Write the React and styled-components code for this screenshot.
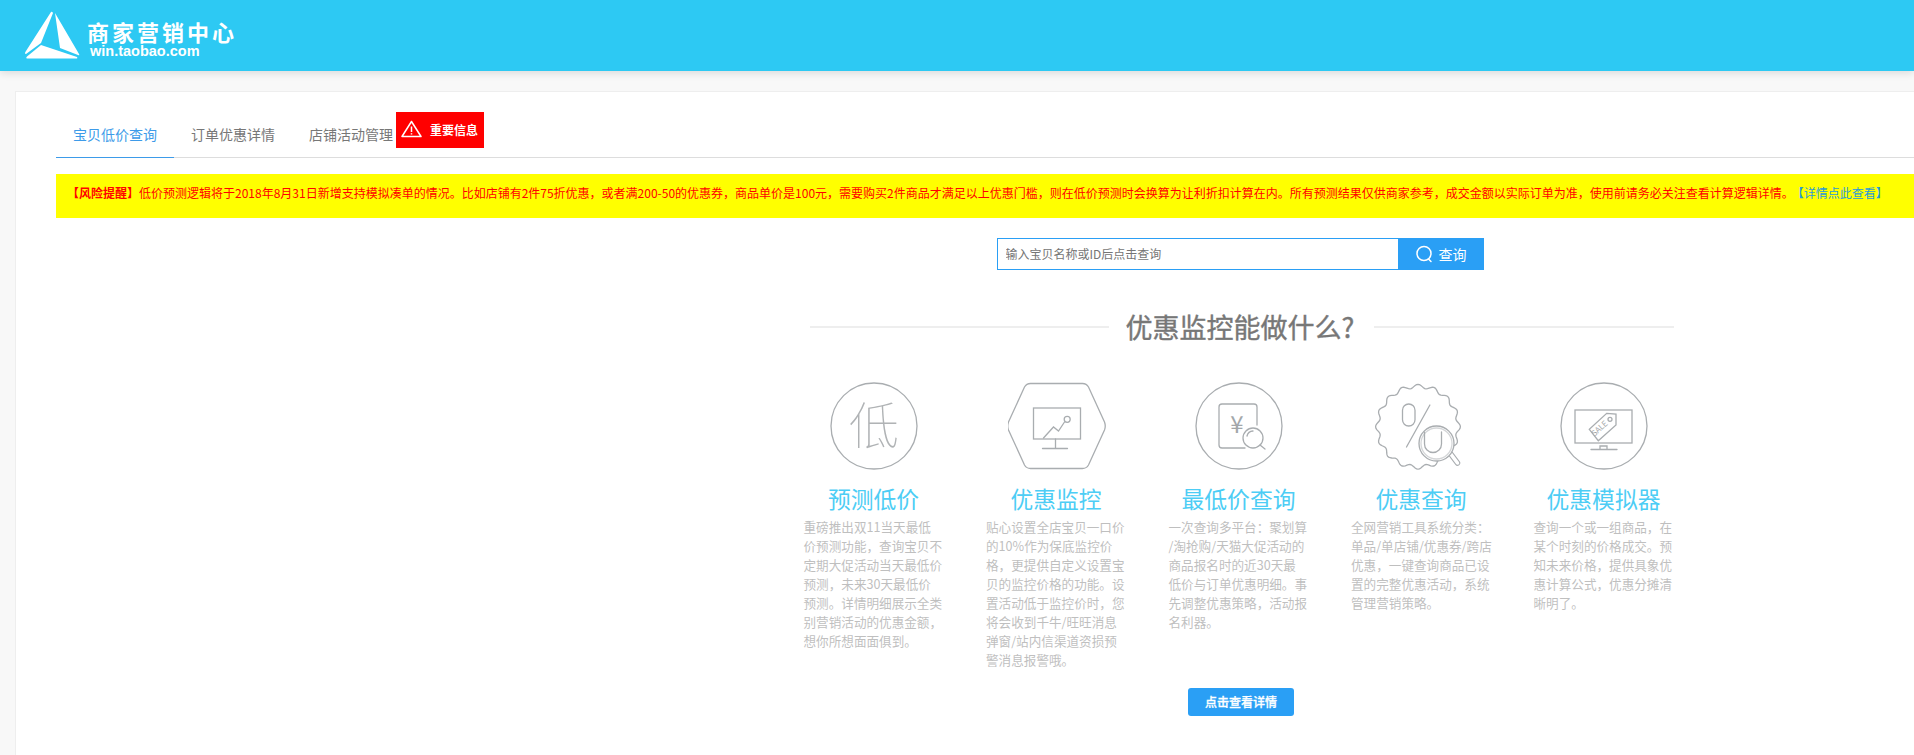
import React from "react";
import styled, { createGlobalStyle } from "styled-components";

const features = [
  {
    title: "预测低价",
    icon: "low",
    lines: ["重磅推出双11当天最低", "价预测功能，查询宝贝不", "定期大促活动当天最低价", "预测，未来30天最低价", "预测。详情明细展示全类", "别营销活动的优惠金额，", "想你所想面面俱到。"]
  },
  {
    title: "优惠监控",
    icon: "monitor",
    lines: ["贴心设置全店宝贝一口价", "的10%作为保底监控价", "格，更提供自定义设置宝", "贝的监控价格的功能。设", "置活动低于监控价时，您", "将会收到千牛/旺旺消息", "弹窗/站内信渠道资损预", "警消息报警哦。"]
  },
  {
    title: "最低价查询",
    icon: "price",
    lines: ["一次查询多平台：聚划算", "/淘抢购/天猫大促活动的", "商品报名时的近30天最", "低价与订单优惠明细。事", "先调整优惠策略，活动报", "名利器。"]
  },
  {
    title: "优惠查询",
    icon: "discount",
    lines: ["全网营销工具系统分类：", "单品/单店铺/优惠券/跨店", "优惠，一键查询商品已设", "置的完整优惠活动，系统", "管理营销策略。"]
  },
  {
    title: "优惠模拟器",
    icon: "sale",
    lines: ["查询一个或一组商品，在", "某个时刻的价格成交。预", "知未来价格，提供具象优", "惠计算公式，优惠分摊清", "晰明了。"]
  }
];

// wavy outline of the discount badge
const wavyPath = () => {
  const pts = [];
  for (let i = 0; i <= 180; i++) {
    const a = (i / 180) * Math.PI * 2;
    const r = 40.5 + 1.9 * Math.cos(a * 16);
    pts.push(`${(46.5 + r * Math.cos(a)).toFixed(2)} ${(44.7 + r * Math.sin(a)).toFixed(2)}`);
  }
  return "M" + pts.join("L") + "Z";
};

const Logo = () => (
  <svg width="64" height="54" viewBox="20 8 64 54">
    <path fill="#fff" d="M51 12 Q52 11 53 13 L41 43 L26 54 Q24 54 26 51Z" />
    <path fill="#fff" d="M55 13 L79 54 Q80 56 78 55 L60 48Z" />
    <path fill="#fff" d="M41 45 L77 57 Q78 58.500 76 58.500 L28 58.500 Q25 58.500 27 56.500Z" />
  </svg>
);

const FeatureIcon = ({ type }) => {
  if (type === "low") {
    return (
      <IconSvg viewBox="0 0 100 88">
        <circle cx="49" cy="44" r="43" />
        <ThinGlyph x="49" y="62" fontSize="50">低</ThinGlyph>
      </IconSvg>
    );
  }
  if (type === "monitor") {
    return (
      <IconSvg viewBox="1.500 0 100 88">
        <path d="M24 1.500H76Q80 1.500 82 5L98 40Q99.500 44 98 48L82 83Q80 86.500 76 86.500H24Q20 86.500 18 83L2 48Q.5 44 2 40L18 5Q20 1.500 24 1.500Z" />
        <rect x="27" y="26" width="47" height="31" />
        <path d="M49 57V66M36 66.500H61" />
        <path d="M37 56L47 45L52 49L58 40" />
        <circle cx="60.700" cy="37.300" r="3" />
      </IconSvg>
    );
  }
  if (type === "price") {
    return (
      <IconSvg viewBox="1 0 100 88">
        <circle cx="50" cy="44" r="43" />
        <path d="M68 43V25a3 3 0 0 0-3-3H33a3 3 0 0 0-3 3V63a3 3 0 0 0 3 3H56" />
        <IconText x="48" y="51" fontSize="24">¥</IconText>
        <circle cx="64" cy="56" r="10" />
        <path d="M58 54a6.500 6.500 0 0 1 6-5M71 63L76 67" />
      </IconSvg>
    );
  }
  if (type === "discount") {
    return (
      <IconSvg viewBox="1.500 0 100 88">
        <path d={wavyPath()} />
        <rect x="31" y="22" width="12.500" height="22" rx="6.200" />
        <path d="M58.400 23L35 65" />
        <path d="M77 69L86 81" stroke="#a9adb0" strokeWidth="5.500" strokeLinecap="round" />
        <path d="M77 69L86 81" stroke="#fff" strokeWidth="3.500" strokeLinecap="round" />
        <circle cx="65" cy="61.500" r="17.500" fill="#fff" />
        <circle cx="65" cy="61.500" r="15.500" stroke="#d4d6d8" />
        <path d="M53 50V62a8.500 8.500 0 0 0 17 0V50" />
      </IconSvg>
    );
  }
  return (
    <IconSvg viewBox="1 0 100 88">
      <circle cx="50" cy="44" r="43" />
      <rect x="21" y="28" width="57" height="33" />
      <path d="M46 67V64H53V67M37 67.500H63" />
      <path d="M52.700 31.300L62 32V43L44.300 58.700L35.300 47.300Z" />
      <circle cx="56" cy="37.300" r="2" />
      <IconText x="46" y="49" fontSize="8" transform="rotate(-42 46 47)">SALE</IconText>
    </IconSvg>
  );
};

export default function App() {
  return (
    <>
      <GlobalStyle />
      <Header>
        <Logo />
        <Brand>
          <BrandName>商家营销中心</BrandName>
          <BrandUrl>win.taobao.com</BrandUrl>
        </Brand>
      </Header>

      <Card>
        <Tabs>
          <Tab active>宝贝低价查询</Tab>
          <Tab>订单优惠详情</Tab>
          <Tab>店铺活动管理</Tab>
          <Notice>
            <svg width="21" height="18" viewBox="0 0 21 18" fill="none" stroke="#fff" strokeWidth="1.500" strokeLinejoin="round">
              <path d="M10.500 1.500L20 16.500H1Z" />
              <path d="M10.500 6.500V12M10.500 13.300V14.600" />
            </svg>
            重要信息
          </Notice>
        </Tabs>

        <Warning>
          <strong>【风险提醒】</strong>
          低价预测逻辑将于2018年8月31日新增支持模拟凑单的情况。比如店铺有2件75折优惠，或者满200-50的优惠券，商品单价是100元，需要购买2件商品才满足以上优惠门槛，则在低价预测时会换算为让利折扣计算在内。所有预测结果仅供商家参考，成交金额以实际订单为准，使用前请务必关注查看计算逻辑详情。
          <WarningLink>【详情点此查看】</WarningLink>
        </Warning>

        <Panel>
          <Search>
            <SearchInput placeholder="输入宝贝名称或ID后点击查询" />
            <SearchButton>
              <svg width="18" height="18" viewBox="0 0 18 18" fill="none" stroke="#fff" strokeWidth="1.500" strokeLinecap="round">
                <circle cx="9" cy="8.500" r="7" />
                <path d="M13.500 14L16 16.500" />
              </svg>
              查询
            </SearchButton>
          </Search>

          <Heading>
            <HeadingLine />
            <HeadingText>优惠监控能做什么?</HeadingText>
            <HeadingLine />
          </Heading>

          <Features>
            {features.map(f => (
              <Feature key={f.title}>
                <FeatureIcon type={f.icon} />
                <FeatureTitle>{f.title}</FeatureTitle>
                <FeatureText>
                  {f.lines.map(line => (
                    <span key={line}>{line}</span>
                  ))}
                </FeatureText>
              </Feature>
            ))}
          </Features>

          <DetailButton>点击查看详情</DetailButton>
        </Panel>
      </Card>
    </>
  );
}

const GlobalStyle = createGlobalStyle`
  html, body {
    margin: 0;
    height: 755px;
    overflow: hidden;
    background: #f8f8f8;
    font-family: "Noto Sans CJK SC", "Liberation Sans", sans-serif;
  }
`;

const Header = styled.header`
  height: 71px;
  display: flex;
  align-items: flex-start;
  padding: 8px 0 0 20px;
  box-sizing: border-box;
  background-color: #2dc9f3;
  box-shadow: 0 2px 8px rgba(0, 0, 0, 0.12);
`;

const Brand = styled.div`
  display: flex;
  flex-direction: column;
  margin-left: 3px;
  color: #fff;
`;

const BrandName = styled.div`
  font-size: 22px;
  line-height: 21px;
  margin-top: 13px;
  font-weight: bold;
  letter-spacing: 3px;
`;

const BrandUrl = styled.div`
  font-family: "Liberation Sans", sans-serif;
  font-size: 14.500px;
  line-height: 16px;
  font-weight: bold;
  margin: 1px 0 0 3px;
`;

const Card = styled.main`
  margin: 20px 0 0 15px;
  height: 680px;
  padding: 20px 0 0 40px;
  box-sizing: border-box;
  background-color: #fff;
  border: 1px solid #eee;
  border-right: none;
`;

const Tabs = styled.nav`
  display: flex;
  align-items: flex-start;
  height: 45px;
  border-bottom: 1px solid #ddd;
`;

const Tab = styled.a`
  width: 118px;
  height: 46px;
  box-sizing: border-box;
  padding-top: 12px;
  text-align: center;
  font-size: 14px;
  line-height: 20px;
  color: ${p => (p.active ? "#3d9be9" : "#777")};
  border-bottom: ${p => (p.active ? "1px solid #3d9be9" : "none")};
`;

const Notice = styled.div`
  display: flex;
  align-items: center;
  gap: 8px;
  height: 36px;
  width: 88px;
  box-sizing: border-box;
  margin-left: -14px;
  padding: 0 0 2px 5px;
  background-color: #f00;
  color: #fff;
  font-size: 12px;
  font-weight: bold;
`;

const Warning = styled.div`
  margin-top: 16px;
  height: 44px;
  padding: 10px 0 0 11px;
  box-sizing: border-box;
  background-color: #ff0;
  color: #f00;
  font-size: 12px;
  line-height: 17px;
  white-space: nowrap;

  strong {
    font-weight: bold;
  }
`;

const WarningLink = styled.a`
  color: #2a9ad8;
  margin-left: 4px;
`;

const Panel = styled.section`
  width: 880px;
  margin: 20px 0 0 744px;
  display: flex;
  flex-direction: column;
  align-items: center;
`;

const Search = styled.form`
  display: flex;
  width: 487px;
  height: 32px;
`;

const SearchInput = styled.input`
  flex: 1;
  min-width: 0;
  height: 100%;
  box-sizing: border-box;
  padding: 0 8px 2px;
  border: 1px solid #2a9ff5;
  border-right: none;
  outline: none;
  font-family: inherit;
  font-size: 12px;

  ::placeholder {
    color: #777;
    opacity: 1;
  }
`;

const SearchButton = styled.div`
  width: 86px;
  display: flex;
  align-items: center;
  justify-content: center;
  gap: 6px;
  background-color: #2a9ff5;
  color: #fff;
  font-size: 14px;
`;

const Heading = styled.div`
  width: 864px;
  height: 36px;
  margin: 39px 0 0 3px;
  display: flex;
  align-items: center;
  gap: 17px;
`;

const HeadingLine = styled.div`
  flex: 1;
  height: 2px;
  background-color: #eee;
`;

const HeadingText = styled.h2`
  margin: 0 3px 0 0;
  font-size: 27px;
  line-height: 36px;
  font-weight: normal;
  color: #777;
  -webkit-text-stroke: 0.4px #777;
  white-space: nowrap;
`;

const Features = styled.div`
  width: 873px;
  height: 288px;
  margin-top: 37px;
  display: grid;
  grid-template-columns: repeat(5, 143px);
  column-gap: 39.500px;
`;

const Feature = styled.div`
  display: flex;
  flex-direction: column;
  align-items: center;
`;

const IconSvg = styled.svg`
  width: 100px;
  height: 88px;
  fill: none;
  stroke: #a9adb0;
  stroke-width: 1.300;
  stroke-linecap: round;
  flex-shrink: 0;
`;

const IconText = styled.text`
  fill: #a3a7aa;
  stroke: none;
  text-anchor: middle;
  font-family: "Noto Sans CJK SC", "Liberation Sans", sans-serif;
`;

const ThinGlyph = styled(IconText)`
  fill: #b0b3b5;
  font-weight: 100;
`;

const FeatureTitle = styled.h3`
  margin: 14px 0 0 -3px;
  font-size: 22.800px;
  line-height: 30px;
  font-weight: normal;
  color: #4dcdf5;
  white-space: nowrap;
`;

const FeatureText = styled.p`
  margin: 3px 0 0;
  width: 143px;
  font-size: 12.600px;
  line-height: 19px;
  color: #bfbfbf;

  span {
    display: block;
    white-space: nowrap;
  }
`;

const DetailButton = styled.div`
  width: 106px;
  height: 28px;
  margin: 18px 0 0 2px;
  border-radius: 3px;
  background-color: #2a9ff5;
  color: #fff;
  font-size: 12px;
  font-weight: 500;
  -webkit-text-stroke: 0.3px #fff;
  line-height: 28px;
  text-align: center;
`;
